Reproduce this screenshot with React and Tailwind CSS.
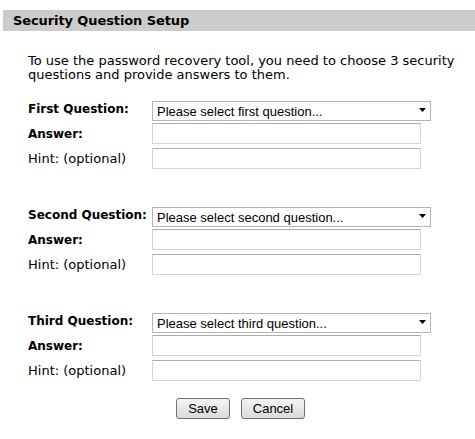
import React from 'react';

const SECTIONS = [
  { label: 'First Question:', placeholder: 'Please select first question...' },
  { label: 'Second Question:', placeholder: 'Please select second question...' },
  { label: 'Third Question:', placeholder: 'Please select third question...' },
];

function QuestionSelect({ placeholder }) {
  return (
    <div className="relative w-[279px] h-[20px]">
      <select
        defaultValue=""
        className="appearance-none w-full h-full border border-[#b4b4b4] bg-white pl-[4px] pr-[20px] text-[13px] text-black outline-none rounded-none"
        style={{ fontFamily: "'Liberation Sans', Arial, sans-serif" }}
      >
        <option value="">{placeholder}</option>
      </select>
      {/* dropdown arrow */}
      <svg
        className="absolute right-[5px] top-[9px] pointer-events-none"
        width="7"
        height="4"
        viewBox="0 0 7 4"
      >
        <polygon points="0,0 7,0 3.5,4" fill="#000" />
      </svg>
    </div>
  );
}

function TextBox() {
  return (
    <input
      type="text"
      className="block w-[269px] h-[21px] border border-[#d4d4d4] border-t-[#ababab] bg-white outline-none rounded-[1px]"
    />
  );
}

export default function App() {
  return (
    <div
      className="w-[475px] h-[439px] bg-white text-black pt-[10px] pl-[3px]"
      style={{ fontFamily: "'DejaVu Sans', Verdana, sans-serif" }}
    >
      {/* header bar */}
      <div className="h-[21px] bg-[#cccccc] pl-[10px] flex items-center">
        <span className="text-[13px] font-bold leading-none tracking-[-0.1px]">Security Question Setup</span>
      </div>

      <div className="pl-[25px] pt-[23px]">
        <p className="text-[13px] leading-[14px] w-[430px]">
          To use the password recovery tool, you need to choose 3 security questions and provide answers to them.
        </p>

        <div className="flex flex-col gap-[36px] mt-[17px]">
          {SECTIONS.map((s) => (
            <div key={s.label} className="flex flex-col gap-[4px]">
              <div className="flex items-center">
                <span className="w-[124px] text-[12px] font-bold whitespace-nowrap">{s.label}</span>
                <QuestionSelect placeholder={s.placeholder} />
              </div>
              <div className="flex items-center">
                <span className="w-[124px] text-[12px] font-bold whitespace-nowrap">Answer:</span>
                <TextBox />
              </div>
              <div className="flex items-center">
                <span className="w-[124px] text-[13px] whitespace-nowrap">Hint: (optional)</span>
                <TextBox />
              </div>
            </div>
          ))}
        </div>

        <div className="flex gap-[11px] mt-[17px] pl-[148px]">
          <button
            className="w-[54px] h-[21px] border border-[#707070] rounded-[3px] bg-gradient-to-b from-[#f4f4f4] to-[#dadada] text-[13px] leading-none"
            style={{ fontFamily: "'Liberation Sans', Arial, sans-serif" }}
          >
            Save
          </button>
          <button
            className="w-[64px] h-[21px] border border-[#707070] rounded-[3px] bg-gradient-to-b from-[#f4f4f4] to-[#dadada] text-[13px] leading-none"
            style={{ fontFamily: "'Liberation Sans', Arial, sans-serif" }}
          >
            Cancel
          </button>
        </div>
      </div>
    </div>
  );
}
